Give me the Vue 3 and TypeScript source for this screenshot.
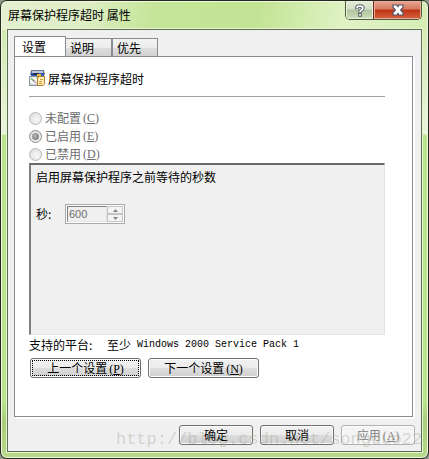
<script setup lang="ts">
import { ref } from 'vue'

interface Choice {
  value: string
  label: string
  key: string
}

const tabs: string[] = ['设置', '说明', '优先']
const activeTab = ref<string>('设置')

const choices: Choice[] = [
  { value: 'none', label: '未配置', key: 'C' },
  { value: 'enabled', label: '已启用', key: 'E' },
  { value: 'disabled', label: '已禁用', key: 'D' },
]
const state = ref<string>('enabled')
const seconds = ref<string>('600')
</script>

<template>
  <main class="window">
    <header class="titlebar">
      <h1 class="title">屏幕保护程序超时 属性</h1>
      <div class="caption">
        <button class="help" type="button" aria-label="帮助">
          <svg width="10" height="13" viewBox="0 0 12 15">
            <path d="M2.4 6V3.9Q2.6 2.2 6 2.2T9.4 4.6Q9.4 6.2 7.4 7.2Q6 8 6 10" fill="none" stroke="#5b6069" stroke-width="4.4" />
            <path d="M3.8 10h4.4v5H3.8z" fill="#5b6069" />
            <path d="M2.4 5V3.9Q2.6 2.2 6 2.2T9.4 4.6Q9.4 6.2 7.4 7.2Q6 8 6 9.6" fill="none" stroke="#fff" stroke-width="2" />
            <path d="M5 11.6h2v2.2H5z" fill="#fff" />
          </svg>
        </button>
        <button class="close" type="button" aria-label="关闭">
          <svg width="12" height="12" viewBox="0 0 12 12">
            <path d="M1 1h4l1 1.6L7 1h4v2.4L8.6 6L11 8.6V11H7L6 9.4L5 11H1V8.6L3.4 6L1 3.4z" fill="#fff" stroke="#535666" stroke-width="1.2" />
          </svg>
        </button>
      </div>
    </header>

    <section class="client">
      <div class="tabs" role="tablist">
        <button
          v-for="tab in tabs"
          :key="tab"
          type="button"
          role="tab"
          class="tab"
          :class="{ active: tab === activeTab }"
          :aria-selected="tab === activeTab"
          @click="activeTab = tab"
        >{{ tab }}</button>
      </div>

      <div class="panel" role="tabpanel">
        <div class="heading">
          <svg width="16" height="16" viewBox="0 0 16 16" aria-hidden="true">
            <path d="M2 0h13l1 5H1z" fill="#6f7b96" />
            <path d="M3 1h11v2H3z" fill="#b9c4dc" />
            <path d="M2 3h13v4H2z" fill="#3457b8" />
            <path d="M4 3h6v2H4z" fill="#26324f" />
            <path d="M8 4h4v2H8z" fill="#e9b93c" />
            <path d="M0 6h9v10H0z" fill="#8c949e" />
            <path d="M1 7h7v8H1z" fill="#cfd8d6" />
            <circle cx="4.5" cy="10.5" r="3.4" fill="#f7faf8" />
            <path d="M4.5 10.5L1.4 9.4l1.6-2z" fill="#79b96b" />
            <path d="M4.5 10.5l3 1.4-1.6 1.8z" fill="#d99aa8" />
            <circle cx="4.5" cy="10.5" r="1" fill="#6d7884" />
            <path d="M9 6h7v8l-2 2H8V7z" fill="#b57f31" />
            <path d="M9 8l1-1h5v7l-1 1H9z" fill="#fff0ba" />
            <path d="M11 9.5h3M10 11.5h3M10 13.5h3" stroke="#d69a3e" />
          </svg>
          <h2>屏幕保护程序超时</h2>
        </div>

        <div class="choices">
          <label v-for="choice in choices" :key="choice.value" class="choice">
            <input v-model="state" type="radio" name="state" :value="choice.value" disabled />
            <span>{{ choice.label }}</span>
            <span class="key">(<u>{{ choice.key }}</u>)</span>
          </label>
        </div>

        <div class="options">
          <p>启用屏幕保护程序之前等待的秒数</p>
          <div class="field">
            <label for="seconds">秒:</label>
            <div class="spinner">
              <input id="seconds" v-model="seconds" type="text" inputmode="numeric" disabled />
              <div class="arrows">
                <button type="button" disabled aria-label="增加">
                  <svg width="5" height="3" viewBox="0 0 5 3"><path d="M0 3L2.5 0L5 3z" fill="#858585" /></svg>
                </button>
                <button type="button" disabled aria-label="减少">
                  <svg width="5" height="3" viewBox="0 0 5 3"><path d="M0 0L2.5 3L5 0z" fill="#858585" /></svg>
                </button>
              </div>
            </div>
          </div>
        </div>

        <p class="platform">
          <span>支持的平台:</span>
          <span>至少</span>
          <span class="latin">Windows 2000 Service Pack 1</span>
        </p>

        <div class="steps">
          <button class="push step focused" type="button">上一个设置<span class="key">(<u>P</u>)</span></button>
          <button class="push step" type="button">下一个设置<span class="key">(<u>N</u>)</span></button>
        </div>
      </div>

      <footer class="actions">
        <button class="push" type="button">确定</button>
        <button class="push" type="button">取消</button>
        <button class="push" type="button" disabled>应用<span class="key">(<u>A</u>)</span></button>
      </footer>
    </section>

    <div class="watermark">http://blog.csdn.net/songduo22</div>
  </main>
</template>

<style>
body {
  margin: 0;
  background: #8d9487;
}
</style>

<style scoped>
* {
  box-sizing: border-box;
}

.window {
  position: relative;
  display: flex;
  flex-direction: column;
  min-height: 100vh;
  padding: 0 6px 6px;
  border: 1px solid #24291f;
  border-radius: 7px;
  box-shadow: inset 0 0 0 1px #eff8df;
  background:
    linear-gradient(100deg, #e4f0d0 0, #deeec5 20%, #c5e598 36%, #c3e494 60%, #dff2c4 80%, #d5edb5 100%) top / 100% 29px no-repeat,
    linear-gradient(#cde7a7 0, #e9f5dc 133px, #bce58f 134px, #bce58f 400px, #a8cd7c 420px, #b7da8b 100%);
  font: 12px/18px "Noto Sans CJK SC", sans-serif;
  color: #000;
}

button,
input {
  margin: 0;
  padding: 0;
  font: inherit;
  color: inherit;
}

p,
h1,
h2 {
  margin: 0;
  font: inherit;
}

svg {
  display: block;
  flex: none;
}

.titlebar {
  display: flex;
  justify-content: space-between;
  height: 28px;
  flex: none;
}

.title {
  padding: 5px 0 0 1px;
}

.caption {
  display: flex;
  height: 19px;
  border: 1px solid #4d5a43;
  border-top: 0;
  border-radius: 0 0 5px 5px;
  overflow: hidden;
}

.caption button {
  display: flex;
  align-items: center;
  justify-content: center;
  border: 0;
}

.help {
  width: 27px;
  background: linear-gradient(#e2ecd8 0, #d3e0c6 45%, #b1c2a0 50%, #cde0b6 100%);
  box-shadow: inset 0 0 0 1px #e8f2dc;
}

.caption .close {
  width: 48px;
  border-left: 1px solid #6b2a1c;
  background: linear-gradient(#e4a797 0, #d5795f 45%, #bd3216 50%, #d7653f 100%);
  box-shadow: inset 0 0 0 1px #edaa94;
}

.client {
  display: flex;
  flex: 1;
  flex-direction: column;
  padding: 6px;
  border: 1px solid #5e6e50;
  box-shadow: 0 0 0 1px #e6f5d0;
  background: #f0f0f0;
}

.tabs {
  display: flex;
  align-items: flex-end;
  height: 21px;
  margin-bottom: -1px;
}

.tab {
  width: 46px;
  height: 19px;
  padding-left: 4px;
  border: 1px solid #898c95;
  border-left-width: 1px;
  background: linear-gradient(#f3f3f3 0, #ececec 50%, #dedede 51%, #d2d2d2 100%);
  line-height: 18px;
  text-align: left;
}

.tab.active {
  width: 52px;
  height: 21px;
  padding-left: 7px;
  border-bottom: 0;
  background: #fff;
}

.tab.active + .tab {
  border-left: 0;
}

.panel {
  display: flex;
  flex: 1;
  flex-direction: column;
  margin-right: 2px;
  padding: 13px 27px 38px 14px;
  border: 1px solid #898c95;
  box-shadow: 2px 2px 0 #fff;
  background: #fff;
}

.heading {
  display: flex;
  gap: 3px;
  height: 27px;
  border-bottom: 1px solid #a0a0a0;
}

.choices {
  padding-top: 12px;
}

.choice {
  display: flex;
  align-items: center;
  height: 18px;
  color: #6d6d6d;
}

.choice input {
  display: grid;
  place-items: center;
  width: 13px;
  height: 13px;
  margin-right: 3px;
  appearance: none;
  border: 1px solid #b8b8b8;
  border-radius: 50%;
  background: radial-gradient(circle at 60% 60%, #f8f8f8, #d8d8d8);
}

.choice input:checked {
  border-color: #8e8e8e;
}

.choice input:checked::before {
  content: "";
  width: 7px;
  height: 7px;
  border-radius: 50%;
  background: radial-gradient(circle at 40% 40%, #b4b4b4, #6f6f6f);
}

.latin {
  font-family: "Liberation Mono", monospace;
  font-size: 10px;
}

.key {
  margin-left: 2px;
  font-family: "Liberation Serif", serif;
}

.options {
  flex: 1;
  padding: 3px 5px;
  border: 1px solid #e3e3e3;
  border-top: 2px solid #696969;
  border-left: 2px solid #808080;
  background: #f0f0f0;
}

.field {
  display: flex;
  align-items: center;
  gap: 12px;
  margin-top: 18px;
}

.field label {
  width: 17px;
}

.spinner {
  display: flex;
  width: 60px;
  height: 20px;
  padding: 1px;
  border: 1px solid #a9a9a9;
  background: #fff;
}

.spinner input {
  flex: 1;
  min-width: 0;
  padding-left: 1px;
  border: 1px solid #e3e3e3;
  border-top-color: #808080;
  border-left-color: #808080;
  border-radius: 0;
  background: #f0f0f0;
  font: 11px/14px "Liberation Sans", sans-serif;
  color: #6d6d6d;
}

.arrows {
  display: flex;
  flex-direction: column;
  width: 16px;
}

.arrows button {
  display: flex;
  flex: 1;
  align-items: center;
  justify-content: center;
  border: 1px solid #c5c5c5;
  border-radius: 0;
  background: #f4f4f4;
}

.platform {
  display: flex;
  gap: 6px;
  padding-top: 1px;
  height: 23px;
}

.platform span:first-child {
  width: 72px;
}

.steps {
  display: flex;
  gap: 7px;
  padding-left: 1px;
}

.push {
  width: 74px;
  height: 20px;
  border: 1px solid #707070;
  border-radius: 3px;
  box-shadow: inset 0 0 0 1px #fcfcfc;
  background: linear-gradient(#f2f2f2 0, #ebebeb 50%, #dddddd 51%, #cfcfcf 100%);
  line-height: 18px;
  text-align: center;
}

.push:disabled {
  border-color: #adb2b5;
  background: #f4f4f4;
  color: #838383;
}

.step {
  width: 111px;
}

.focused {
  outline: 1px dotted #000;
  outline-offset: -3px;
}

.actions {
  display: flex;
  justify-content: flex-end;
  gap: 7px;
  padding-top: 8px;
}

.watermark {
  position: absolute;
  right: 6px;
  bottom: 6px;
  color: rgba(160, 162, 145, 0.38);
  font: 17px/24px "Liberation Mono", monospace;
  pointer-events: none;
}
</style>
